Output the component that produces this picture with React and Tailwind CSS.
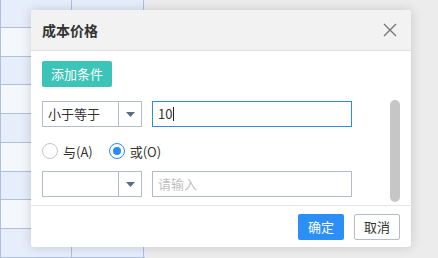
import React from "react";

const font = { fontFamily: '"Noto Sans CJK SC", "Noto Sans", sans-serif' };

function Grid() {
  const rows = Array.from({ length: 9 });
  return (
    <div className="w-[145px] flex flex-col border-l border-[#aebfd9]">
      {rows.map((_, i) => (
        <div
          key={i}
          className={`flex ${i === 0 ? "h-[31px]" : "h-[32px]"} border-b border-[#aebfd9] ${
            i % 2 === 0 ? "bg-[#e6eefb]" : "bg-[#f4f7fc]"
          }`}
        >
          <div className="w-[71px] border-r border-[#aebfd9]" />
          <div className="w-[72px] border-r border-[#aebfd9]" />
        </div>
      ))}
    </div>
  );
}

function Select({ value }) {
  return (
    <div className="w-[100px] h-[26px] border border-[#b3bccb] flex bg-white">
      <div className="flex-1 flex items-center pl-[5px] text-[13px] text-[#333]">{value}</div>
      <div className="w-[23px] border-l border-[#b3bccb] flex items-center justify-center">
        <svg width="9" height="5" viewBox="0 0 9 5">
          <path d="M0 0 H9 L4.5 5 Z" fill="#5b6c86" />
        </svg>
      </div>
    </div>
  );
}

function Radio({ checked, label }) {
  return (
    <div className="flex items-center gap-[5px]">
      <div
        className={`w-[16px] h-[16px] rounded-full border flex items-center justify-center ${
          checked ? "border-[#2d8cf0]" : "border-[#c0c6d0]"
        }`}
      >
        {checked && <div className="w-[8px] h-[8px] rounded-full bg-[#2d8cf0]" />}
      </div>
      <span className="text-[13px] text-[#333] leading-none">{label}</span>
    </div>
  );
}

export default function App() {
  return (
    <div className="relative w-[438px] h-[258px] overflow-hidden bg-[#ececec] flex" style={font}>
      <Grid />
      <div className="absolute left-[31px] top-[10px] w-[380px] h-[237px] bg-white rounded-[3px] shadow-[0_0_12px_rgba(0,0,0,0.16)] flex flex-col">
        <div className="h-[41px] bg-[#f2f2f2] border-b border-[#e0e0e0] rounded-t-[3px] flex items-center justify-between pl-[11px] pr-[14px]">
          <span className="text-[14px] font-bold text-[#333]">成本价格</span>
          <svg width="14" height="14" viewBox="0 0 14 14">
            <path d="M1 1 L13 13 M13 1 L1 13" stroke="#777" strokeWidth="1.4" fill="none" />
          </svg>
        </div>
        <div className="h-[154px] flex">
          <div className="flex flex-col pl-[11px] pt-[10px]">
            <div className="w-[70px] h-[26px] rounded-[2px] bg-[#3cc4b8] text-white text-[13px] flex items-center justify-center">
              添加条件
            </div>
            <div className="flex mt-[14px] gap-[10px]">
              <Select value="小于等于" />
              <div className="w-[200px] h-[26px] border border-[#2d8cf0] flex items-center pl-[5px] text-[13px] text-[#333]">
                10<span className="w-px h-[14px] bg-[#222] ml-px" />
              </div>
            </div>
            <div className="flex mt-[16px] h-[16px] gap-[16px]">
              <Radio label="与(A)" />
              <Radio checked label="或(O)" />
            </div>
            <div className="flex mt-[12px] gap-[10px]">
              <Select value="" />
              <div className="w-[200px] h-[26px] border border-[#b3bccb] flex items-center pl-[5px] text-[13px] text-[#c0c0c0]">
                请输入
              </div>
            </div>
          </div>
          <div className="ml-auto mr-[11px] mt-[49px] w-[10px] h-[102px] rounded-full bg-[#c6c6c6]" />
        </div>
        <div className="h-[42px] border-t border-[#e6e6e6] flex justify-end items-start pt-[8px] pr-[11px] gap-[10px]">
          <div className="w-[46px] h-[26px] rounded-[2px] bg-[#2b8ff5] text-white text-[13px] flex items-center justify-center">
            确定
          </div>
          <div className="w-[46px] h-[26px] rounded-[2px] border border-[#b3bccb] bg-white text-[#333] text-[13px] flex items-center justify-center">
            取消
          </div>
        </div>
      </div>
    </div>
  );
}
